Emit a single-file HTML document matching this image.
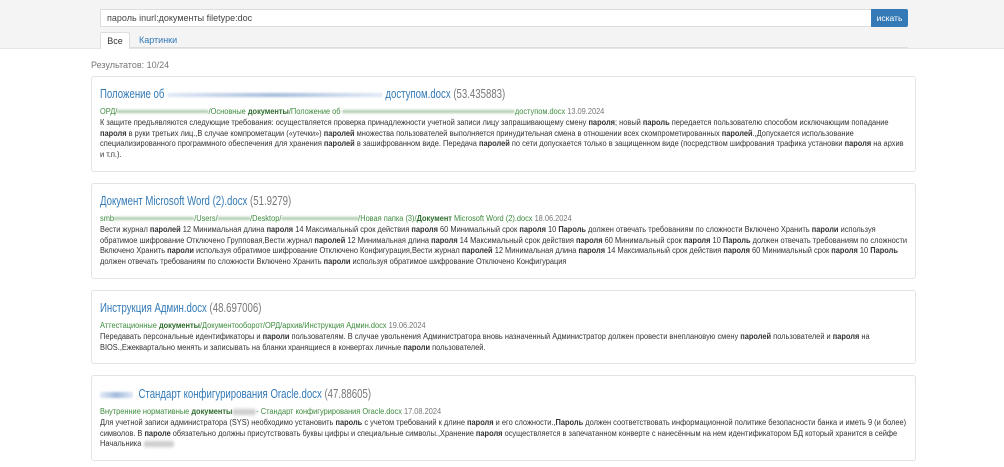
<!DOCTYPE html>
<html><head><meta charset="utf-8"><style>
*{box-sizing:border-box}
body{margin:0;background:#fff;font-family:"Liberation Sans",Arial,sans-serif;color:#333;width:1004px;height:467px;overflow:hidden;position:relative}
.hdr{position:absolute;left:0;top:0;width:1004px;height:49px;background:#f4f4f4;border-bottom:1px solid #e6e6e6}
.inp{position:absolute;left:100px;top:9px;width:772px;height:18px;background:#fff;border:1px solid #ddd;font-size:9px;line-height:16px;padding-left:6px;color:#444}
.btn{position:absolute;left:871px;top:9px;width:37px;height:18px;background:#337ab7;color:#fff;font-size:8.5px;line-height:18px;text-align:center;border-radius:0 2px 2px 0}
.tabline{position:absolute;left:100px;top:47px;width:808px;height:1px;background:#ddd}
.tab1{position:absolute;left:100px;top:32px;width:30px;height:17px;background:#fff;border:1px solid #ddd;border-bottom:none;font-size:9px;line-height:16px;text-align:center;border-radius:2px 2px 0 0}
.tab2{position:absolute;left:139px;top:32px;font-size:9px;line-height:16px;color:#337ab7}
.res{position:absolute;left:91px;top:60px;font-size:9px;color:#777}
.card{position:absolute;left:91px;width:825px;border:1px solid #e3e3e3;border-radius:3px;padding:0 8px}
.t{position:absolute;left:8px;font-size:12.5px;color:#337ab7;white-space:nowrap;transform:scaleX(0.77);transform-origin:0 0}
.t span.s{color:#777}
.p{position:absolute;left:8px;font-size:8.7px;color:#3c8a3c;white-space:nowrap;transform:scaleX(0.853);transform-origin:0 0}
.p .d{color:#777}
.x{position:absolute;left:8px;font-size:8.7px;line-height:10.7px;white-space:nowrap;color:#333;transform:scaleX(0.855);transform-origin:0 0}
b{font-weight:bold;color:#333}
.p b{color:#2d6b2d}
.bl{display:inline-block;height:4px;vertical-align:middle;background:linear-gradient(90deg,rgba(180,200,230,.4),rgba(140,170,210,.8),rgba(180,200,230,.4));border-radius:2px;filter:blur(1px)}
.bg{display:inline-block;height:3px;vertical-align:middle;background:rgba(120,170,120,.6);filter:blur(1px)}
.bgr{display:inline-block;height:6px;vertical-align:middle;background:rgba(170,170,170,.6);filter:blur(1.5px);border-radius:3px}
</style></head><body>
<div class="hdr"></div>
<div class="inp">пароль inurl:документы filetype:doc</div>
<div class="btn">искать</div>
<div class="tabline"></div>
<div class="tab1">Все</div>
<div class="tab2">Картинки</div>
<div class="res">Результатов: 10/24</div>

<div class="card" style="top:76px;height:96px">
<div class="t" style="top:10px">Положение об <span class="bl" style="width:280px"></span> доступом.docx <span class="s">(53.435883)</span></div>
<div class="p" style="top:29px">ОРД/<span class="bg" style="width:107px"></span>/Основные <b>документы</b>/Положение об <span class="bg" style="width:202px"></span>доступом.docx <span class="d">13.09.2024</span></div>
<div class="x" style="top:40px">К защите предъявляются следующие требования: осуществляется проверка принадлежности учетной записи лицу запрашивающему смену <b>пароля</b>; новый <b>пароль</b> передается пользователю способом исключающим попадание<br><b>пароля</b> в руки третьих лиц.,В случае компрометации («утечки») <b>паролей</b> множества пользователей выполняется принудительная смена в отношении всех скомпрометированных <b>паролей</b>.,Допускается использование<br>специализированного программного обеспечения для хранения <b>паролей</b> в зашифрованном виде. Передача <b>паролей</b> по сети допускается только в защищенном виде (посредством шифрования трафика установки <b>пароля</b> на архив<br>и т.п.).</div>
</div>

<div class="card" style="top:183px;height:96px">
<div class="t" style="top:10px">Документ Microsoft Word (2).docx <span class="s">(51.9279)</span></div>
<div class="p" style="top:29px">smb<span class="bg" style="width:94px"></span>/Users/<span class="bg" style="width:38px"></span>/Desktop/<span class="bg" style="width:90px"></span>/Новая папка (3)/<b>Документ</b> Microsoft Word (2).docx <span class="d">18.06.2024</span></div>
<div class="x" style="top:40px">Вести журнал <b>паролей</b> 12 Минимальная длина <b>пароля</b> 14 Максимальный срок действия <b>пароля</b> 60 Минимальный срок <b>пароля</b> 10 <b>Пароль</b> должен отвечать требованиям по сложности Включено Хранить <b>пароли</b> используя<br>обратимое шифрование Отключено Групповая,Вести журнал <b>паролей</b> 12 Минимальная длина <b>пароля</b> 14 Максимальный срок действия <b>пароля</b> 60 Минимальный срок <b>пароля</b> 10 <b>Пароль</b> должен отвечать требованиям по сложности<br>Включено Хранить <b>пароли</b> используя обратимое шифрование Отключено Конфигурация,Вести журнал <b>паролей</b> 12 Минимальная длина <b>пароля</b> 14 Максимальный срок действия <b>пароля</b> 60 Минимальный срок <b>пароля</b> 10 <b>Пароль</b><br>должен отвечать требованиям по сложности Включено Хранить <b>пароли</b> используя обратимое шифрование Отключено Конфигурация</div>
</div>

<div class="card" style="top:290px;height:74px">
<div class="t" style="top:10px">Инструкция Админ.docx <span class="s">(48.697006)</span></div>
<div class="p" style="top:29px">Аттестационные <b>документы</b>/Документооборот/ОРД/архив/Инструкция Админ.docx <span class="d">19.06.2024</span></div>
<div class="x" style="top:40px">Передавать персональные идентификаторы и <b>пароли</b> пользователям. В случае увольнения Администратора вновь назначенный Администратор должен провести внеплановую смену <b>паролей</b> пользователей и <b>пароля</b> на<br>BIOS.,Ежеквартально менять и записывать на бланки хранящиеся в конвертах личные <b>пароли</b> пользователей.</div>
</div>

<div class="card" style="top:375px;height:86px">
<div class="t" style="top:11px"><span class="bl" style="width:43px;height:6px"></span>&nbsp; Стандарт конфигурирования Oracle.docx <span class="s">(47.88605)</span></div>
<div class="p" style="top:30px">Внутренние нормативные <b>документы</b><span class="bgr" style="width:28px"></span>- Стандарт конфигурирования Oracle.docx <span class="d">17.08.2024</span></div>
<div class="x" style="top:41px">Для учетной записи администратора (SYS) необходимо установить <b>пароль</b> с учетом требований к длине <b>пароля</b> и его сложности.,<b>Пароль</b> должен соответствовать информационной политике безопасности банка и иметь 9 (и более)<br>символов. В <b>пароле</b> обязательно должны присутствовать буквы цифры и специальные символы.,Хранение <b>пароля</b> осуществляется в запечатанном конверте с нанесённым на нем идентификатором БД который хранится в сейфе<br>Начальника <span class="bgr" style="width:36px"></span></div>
</div>
</body></html>
